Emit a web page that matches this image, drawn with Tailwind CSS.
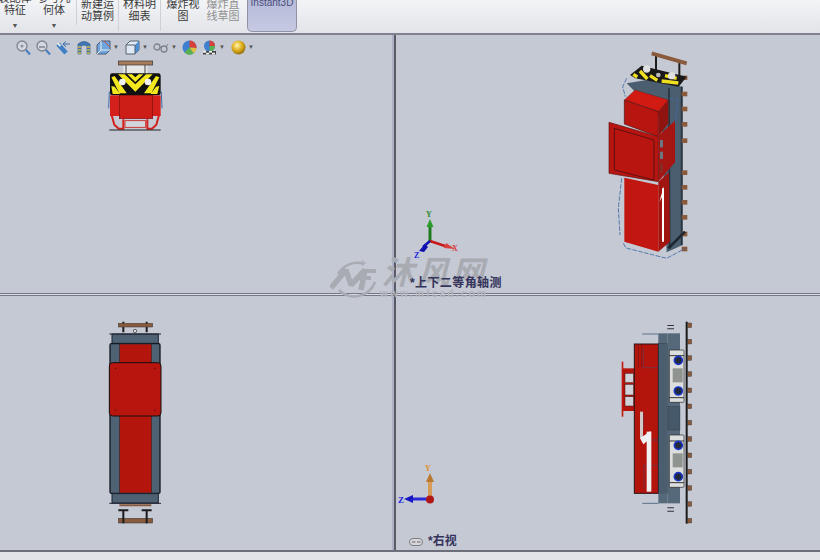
<!DOCTYPE html>
<html lang="zh">
<head>
<meta charset="UTF-8">
<title>Instant3D</title>
<script src="https://cdn.jsdelivr.net/npm/@tailwindcss/browser@4"></script>
</head>
<body class="w-[820px] h-[560px] overflow-hidden bg-[#c5c9d4] font-['Liberation_Sans','Noto_Sans_CJK_SC',sans-serif]">
<div class="relative w-[820px] h-[560px] flex flex-col">

  <!-- ribbon -->
  <div class="h-[35px] shrink-0 flex items-start bg-gradient-to-b from-[#f3f4f6] to-[#e2e4e9] border-b-2 border-[#7f828c] text-[11px] leading-[12px] text-[#3a3a3a] text-center overflow-hidden">
    <div class="w-[30px] h-[33px] flex flex-col items-center mt-[-8px] shrink-0"><span class="whitespace-nowrap">装配体</span><span>特征</span><span class="text-[7px] leading-[20px] text-[#555]">▼</span></div>
    <div class="w-[47px] h-[33px] pl-[2px] flex flex-col items-center mt-[-8px] border-r border-[#cfd1d7] shrink-0"><span class="whitespace-nowrap">参考几</span><span>何体</span><span class="text-[7px] leading-[20px] text-[#555]">▼</span></div>
    <div class="w-[42px] h-[33px] flex flex-col items-center mt-[-2px] border-r border-[#cfd1d7] shrink-0"><span>新建运</span><span>动算例</span></div>
    <div class="w-[42px] h-[33px] flex flex-col items-center mt-[-2px] border-r border-[#cfd1d7] shrink-0"><span>材料明</span><span>细表</span></div>
    <div class="w-[44px] h-[33px] flex flex-col items-center mt-[-2px] shrink-0"><span>爆炸视</span><span>图</span></div>
    <div class="w-[36px] h-[33px] flex flex-col items-center mt-[-2px] text-[#8f8f8f] shrink-0"><span class="whitespace-nowrap">爆炸直</span><span class="whitespace-nowrap">线草图</span></div>
    <div class="w-[50px] h-[32px] ml-[6px] shrink-0 rounded-b-[5px] bg-gradient-to-b from-[#b6bbd8] to-[#c6c9e2] border border-t-0 border-[#8f93a6] text-[#4c4f80] text-[10px] leading-[6px] whitespace-nowrap">Instant3D</div>
  </div>

  <!-- viewports -->
  <div class="flex-1 grid grid-cols-[392px_4px_1fr] grid-rows-[258px_3px_1fr]">
    <div></div>
    <div class="bg-[#aeb1c6] border-r-2 border-[#585a66]"></div>
    <div></div>
    <div class="border-y border-[#757885] bg-[#dadbe6]"></div>
    <div class="border-y border-[#585a66] bg-[#8a8c9c]"></div>
    <div class="border-y border-[#757885] bg-[#dadbe6]"></div>
    <div></div>
    <div class="bg-[#aeb1c6] border-r-2 border-[#585a66]"></div>
    <div class="relative">
      <div class="absolute left-[13px] bottom-[2px] flex items-center gap-[5px] text-[12px] leading-[13px] font-bold text-[#33335c]">
        <svg width="14" height="8" viewBox="0 0 14 8"><rect x="0.500" y="0.500" width="13" height="7" rx="3.500" fill="#d8d8dc" stroke="#7c7c84"/><path d="M3 4h3.500M8 4h3.500" stroke="#666"/></svg>
        <span>*右视</span>
      </div>
    </div>
  </div>

  <!-- status bar -->
  <div class="h-[10px] shrink-0 bg-[#e1e3e9] border-t-2 border-[#6c6f7a]"></div>

  <!-- heads-up toolbar -->
  <div class="absolute left-[16px] top-[39px] h-[16px] flex items-center">
    <svg width="15" height="15" viewBox="0 0 15 15"><circle cx="6" cy="6" r="5" fill="#d3d7df" stroke="#7f848e" stroke-width="1.300"/><circle cx="6" cy="6" r="1.500" fill="#8f959f"/><path d="M10 10l4 4.500" stroke="#4a7fc0" stroke-width="2.200"/></svg>
    <svg class="ml-[4px]" width="16" height="15" viewBox="0 0 16 15"><circle cx="7" cy="6" r="5" fill="#d3d7df" stroke="#7f848e" stroke-width="1.300"/><path d="M4 7h6" stroke="#7f848e" stroke-width="1.500"/><path d="M11 10l4 4.500" stroke="#4a7fc0" stroke-width="2.200"/></svg>
    <svg class="ml-[5px]" width="15" height="15" viewBox="0 0 15 15"><path d="M2 4l8 9" stroke="#3f7fc4" stroke-width="4.500"/><path d="M1.500 3l3 3" stroke="#e4e6ea" stroke-width="2"/><path d="M7 4h7M7 4l3-2.500M7 4l3 2.500" stroke="#3a6ea8" fill="none"/></svg>
    <svg class="ml-[6px]" width="14" height="15" viewBox="0 0 14 15"><path d="M1 14V4q6-5 12 0v10h-3V6q-3-2-6 0v8z" fill="#3f77b8" stroke="#24507f" stroke-width=".6"/><path d="M1 7h3M10 7h3M1 10h3M10 10h3M1 13h3M10 13h3" stroke="#d0ba40" stroke-width="1.400"/></svg>
    <svg class="ml-[5px]" width="15" height="15" viewBox="0 0 15 15"><path d="M1 5l4-4h9v9l-4 4H1z" fill="#6ea5dd" stroke="#4d5a70"/><path d="M5 1v9h9M5 10l-4 4" stroke="#eee" fill="none"/><path d="M8 1l6 6" stroke="#c05050"/></svg>
    <span class="ml-[2px] w-[7px] text-[6px] leading-none text-[#555]">▼</span>
    <svg class="ml-[5px]" width="15" height="15" viewBox="0 0 15 15"><path d="M1 5l4-4h9v9l-4 4H1z" fill="#dfe9f4" stroke="#55616f"/><path d="M10 5v9l4-4V1z" fill="#4c8fd2"/><path d="M1 5h9v9" fill="none" stroke="#55616f"/></svg>
    <span class="ml-[2px] w-[7px] text-[6px] leading-none text-[#555]">▼</span>
    <svg class="ml-[4px]" width="16" height="14" viewBox="0 0 16 14"><circle cx="4" cy="7" r="3" fill="none" stroke="#7d838c" stroke-width="1.300"/><circle cx="11" cy="9" r="3" fill="none" stroke="#7d838c" stroke-width="1.300"/><path d="M7 7l1 1M13 7l2-3" stroke="#7d838c"/></svg>
    <span class="ml-[2px] w-[7px] text-[6px] leading-none text-[#555]">▼</span>
    <svg class="ml-[4px]" width="15" height="15" viewBox="0 0 15 15"><circle cx="7.500" cy="7.500" r="7" fill="#3f7fd0"/><path d="M7.500 7.500V.5A7 7 0 0 1 14.500 8z" fill="#d8403a"/><path d="M7.500 7.500L14.500 8a7 7 0 0 1-3 5.500z" fill="#e0c040"/><path d="M7.500 7.500l4 6a7 7 0 0 1-9 -1z" fill="#58b050"/></svg>
    <svg class="ml-[5px]" width="15" height="15" viewBox="0 0 15 15"><circle cx="7.500" cy="6" r="5.500" fill="#3f7fd0"/><path d="M7.500 6V.5A5.500 5.500 0 0 1 13 6z" fill="#d8403a"/><path d="M7.500 6H13A5.500 5.500 0 0 1 7.500 11.500z" fill="#58b050"/><path d="M1 11h13v3.500H1z" fill="#444"/><path d="M1 11h3v1.700H1zM7 11h3v1.700H7zM4 12.700h3v1.800H4zM10 12.700h3v1.800h-3z" fill="#eee"/></svg>
    <span class="ml-[2px] w-[7px] text-[6px] leading-none text-[#555]">▼</span>
    <svg class="ml-[5px]" width="15" height="15" viewBox="0 0 15 15"><defs><radialGradient id="g" cx=".4" cy=".35" r=".7"><stop offset="0" stop-color="#fff6b0"/><stop offset=".5" stop-color="#e0b020"/><stop offset="1" stop-color="#8a6810"/></radialGradient></defs><circle cx="7.500" cy="7.500" r="7" fill="url(#g)"/></svg>
    <span class="ml-[2px] w-[7px] text-[6px] leading-none text-[#555]">▼</span>
  </div>

  <!-- front view -->
  <svg class="absolute left-[90px] top-[50px]" width="90" height="90" viewBox="0 0 270 270">
    <path d="M58 125l-2 50M214 125l2 50" stroke="#3d6aa8" stroke-width="3"/>
    <rect x="100" y="45" width="72" height="26" fill="#e6e6e6"/>
    <path d="M108 45v25M165 45v25" stroke="#444" stroke-width="3"/>
    <rect x="85" y="33" width="103" height="12" fill="#a87c5a" stroke="#333" stroke-width="2"/>
    <rect x="60" y="70" width="152" height="66" rx="7" fill="#111"/>
    <path d="M64 82l10-4 36 52H88zM64 108l10 2 16 22H68zM208 82l-10-4-36 52h22zM208 108l-10 2-16 22h20z" fill="#f3e81e"/>
    <path d="M84 73h20l32 30 32-30h20l-52 52z" fill="#f3e81e"/>
    <path d="M112 73h14l10 9 10-9h14l-24 23z" fill="#f3e81e"/>
    <circle cx="97" cy="96" r="10" fill="#f0f0f0"/><circle cx="174" cy="96" r="10" fill="#f0f0f0"/>
    <rect x="60" y="136" width="152" height="62" fill="#d4201a"/>
    <path d="M64 192l9 32 13 12h14v-28" fill="none" stroke="#d4201a" stroke-width="6"/>
    <path d="M208 192l-9 32-13 12h-14v-28" fill="none" stroke="#d4201a" stroke-width="6"/>
    <rect x="88" y="136" width="100" height="70" fill="#cc1e16" stroke="#801010" stroke-width="2"/>
    <rect x="105" y="212" width="62" height="20" fill="#d2d5dc" stroke="#c8201a" stroke-width="2.500"/>
    <path d="M58 240h154" stroke="#222" stroke-width="3"/>
  </svg>

  <!-- trimetric view -->
  <svg class="absolute left-[590px] top-[45px]" width="120" height="220" viewBox="0 0 360 660">
    <path d="M198 25v50M268 45v50" stroke="#1c1c1c" stroke-width="6"/>
    <path d="M185 25l105 30" stroke="#8a5a3c" stroke-width="12"/>
    <path d="M110 115l60-10 108 20v475l-48 22-5-100-10-300z" fill="#4a5e70"/>
    <path d="M237 130l2 480M275 125v475" stroke="#27323c" stroke-width="5"/>
    <g fill="#8a5a3c"><rect x="275" y="92" width="17" height="13"/><rect x="275" y="140" width="17" height="14"/><rect x="275" y="185" width="17" height="14"/><rect x="275" y="231" width="17" height="14"/><rect x="275" y="280" width="17" height="14"/><rect x="275" y="376" width="17" height="14"/><rect x="275" y="420" width="17" height="14"/><rect x="275" y="465" width="17" height="14"/><rect x="275" y="510" width="17" height="14"/><rect x="275" y="560" width="17" height="14"/><rect x="275" y="605" width="17" height="14"/></g>
    <path d="M120 90l35-28 135 33-24 30-130-25z" fill="#1a1a1a"/>
    <path d="M150 78l22 24M180 92l22 14M215 108l50 6M225 92l35 8M130 88l12 8" stroke="#f0e020" stroke-width="10"/>
    <circle cx="170" cy="72" r="11" fill="#e0e0e0"/><circle cx="245" cy="92" r="11" fill="#e0e0e0"/><circle cx="205" cy="90" r="7" fill="#b8b8b8"/>
    <path d="M103 165l32-30 100 30-30 35z" fill="#d01a12" stroke="#5a1010"/>
    <path d="M103 165l102 35v75l-102-38z" fill="#b81510" stroke="#4a1010" stroke-width="2"/>
    <path d="M205 200l30-35v70l-30 40z" fill="#8f1410"/>
    <path d="M205 272l50-45v125l-50 58z" fill="#a51512"/>
    <path d="M57 232l148 43v135l-148-25z" fill="#b81510" stroke="#5a1010" stroke-width="2"/>
    <path d="M73 250l119 35v120l-119-30z" fill="#b81510" stroke="#4a1010" stroke-width="2.500"/>
    <path d="M205 410l32-28 3 208-35 30z" fill="#a01510"/>
    <path d="M103 398l102 22v200l-102-30z" fill="#c21710"/>
    <g fill="#6d7680"><rect x="210" y="285" width="9" height="22"/><rect x="210" y="320" width="9" height="22"/></g>
    <path d="M210 355h9v28h-9z" fill="#8a2a24"/>
    <path d="M219 430v160" stroke="#fff" stroke-width="6"/>
    <path d="M208 470l14-46v22z" fill="#fff"/>
    <path d="M110 100l-12 25 8 30M238 160l24 5-5 70M95 400l-10 90 5 80M100 595l8 14 122 31 56-30" fill="none" stroke="#3d6aa8" stroke-width="2.500" stroke-dasharray="14 4"/>
    <path d="M235 610l50-50" stroke="#1d2630" stroke-width="8"/>
  </svg>

  <!-- watermark -->
  <div class="absolute left-[330px] top-[258px] w-[160px] h-[44px] text-[#a9abb2]">
    <svg class="absolute left-0 top-0" width="48" height="44" viewBox="0 0 48 44"><path d="M8 16A22 22 0 0 1 34 6M9 32a22 22 0 0 0 36-8" fill="none" stroke="#a9abb2" stroke-width="2.500"/><path d="M1 30L16 12l5 15 14-15-4 20" fill="none" stroke="#a9abb2" stroke-width="5.500" stroke-linejoin="bevel"/><path d="M32 13h14M29 20h12" stroke="#a9abb2" stroke-width="4"/><path d="M33 2v6M30 5h6" stroke="#a9abb2"/></svg>
    <span class="absolute left-[52px] top-[-2px] text-[32px] leading-[34px] font-bold italic tracking-[3px] whitespace-nowrap">沐风网</span>
    <span class="absolute left-[50px] top-[30px] text-[10px] leading-[11px] font-bold tracking-[2.300px] text-[#b3b5bc] whitespace-nowrap">www.mfcad.com</span>
  </div>

  <!-- label -->
  <span class="absolute left-[410px] top-[277px] text-[12px] leading-[13px] font-bold tracking-[0.400px] text-[#33335c] whitespace-nowrap">*上下二等角轴测</span>

  <!-- top triad -->
  <svg class="absolute left-[411px] top-[208px]" width="52" height="54" viewBox="0 0 52 54">
    <path d="M19 33V17" stroke="#1f7a1f" stroke-width="3"/><path d="M19 11l3.500 8h-7z" fill="#2a9a2a"/>
    <path d="M19 33l15 5" stroke="#c81818" stroke-width="2.500"/><path d="M44 41l-11-1 2-5z" fill="#d84040"/>
    <path d="M19 33l-7 6" stroke="#1010b0" stroke-width="2.500"/><path d="M14 36l-6 7 5 1 4-5z" fill="#1010b0"/>
    <text x="15" y="9" font-size="8" font-weight="700" fill="#2a8a2a" font-family="Liberation Serif">Y</text>
    <text x="41" y="43" font-size="8" font-weight="700" fill="#d84040" font-family="Liberation Serif">X</text>
    <text x="3" y="50" font-size="8" font-weight="700" fill="#2020e0" font-family="Liberation Serif">Z</text>
  </svg>

  <!-- bottom triad -->
  <svg class="absolute left-[394px] top-[462px]" width="48" height="46" viewBox="0 0 48 46">
    <path d="M36 37V19" stroke="#d89c58" stroke-width="4"/><path d="M36 11l4 9h-8z" fill="#b87830"/>
    <path d="M36 37H17" stroke="#2a2ad8" stroke-width="3"/><path d="M10 37l9-4v8z" fill="#1818c0"/>
    <circle cx="36" cy="37.500" r="4" fill="#b01818"/>
    <text x="31" y="9" font-size="8" font-weight="700" fill="#e09030" font-family="Liberation Serif">Y</text>
    <text x="4" y="41" font-size="9" font-weight="700" fill="#2020e0" font-family="Liberation Serif">Z</text>
  </svg>

  <!-- top view -->
  <svg class="absolute left-[90px] top-[315px]" width="90" height="215" viewBox="0 0 270 645">
    <path d="M100 20v32M170 20v32" stroke="#1c1c1c" stroke-width="6"/>
    <rect x="85" y="25" width="103" height="11" fill="#8a5a3c" stroke="#333" stroke-width="1.500"/>
    <circle cx="135" cy="48" r="5" fill="#ddd" stroke="#333" stroke-width="2"/>
    <rect x="66" y="57" width="139" height="28" fill="#4f6274" stroke="#1b2430" stroke-width="3"/>
    <path d="M58 57h155" stroke="#223" stroke-width="3"/>
    <rect x="60" y="86" width="150" height="449" rx="4" fill="#4f6274" stroke="#151a20" stroke-width="4"/>
    <rect x="88" y="87" width="97" height="447" fill="#b3150d" stroke="#26303a" stroke-width="2"/>
    <rect x="58" y="143" width="155" height="160" rx="10" fill="#b8150e" stroke="#151010" stroke-width="3"/>
    <path d="M75 160h3M193 160h3M75 285h3M193 285h3" stroke="#3a0a0a" stroke-width="3"/>
    <rect x="66" y="536" width="139" height="28" fill="#4f6274" stroke="#1b2430" stroke-width="3"/>
    <path d="M58 565h155" stroke="#223" stroke-width="3"/>
    <path d="M88 571h96" stroke="#8a5a3c" stroke-width="6"/>
    <rect x="85" y="610" width="103" height="14" fill="#8a5a3c" stroke="#333" stroke-width="1.500"/>
    <path d="M100 585v40M170 585v40M85 586h30M155 586h30" stroke="#1c1c1c" stroke-width="6"/>
  </svg>

  <!-- right view -->
  <svg class="absolute left-[610px] top-[315px]" width="90" height="215" viewBox="0 0 270 645">
    <path d="M97 57h48M97 565h48" stroke="#5a6f8a" stroke-width="3"/>
    <rect x="35" y="140" width="5" height="165" fill="#c41c14"/>
    <rect x="38" y="160" width="38" height="128" fill="#b3150d"/>
    <rect x="45" y="175" width="26" height="28" fill="#cfd2d8" stroke="#401010" stroke-width="1.500"/>
    <rect x="45" y="208" width="26" height="32" fill="#cfd2d8" stroke="#401010" stroke-width="1.500"/>
    <rect x="45" y="245" width="26" height="28" fill="#cfd2d8" stroke="#401010" stroke-width="1.500"/>
    <rect x="73" y="87" width="72" height="448" fill="#b3150d" stroke="#2a1216" stroke-width="3"/>
    <path d="M85 90v68M95 90v68" stroke="#7a1010" stroke-width="2"/>
    <path d="M100 100v58h45M100 295v50M100 375h45M100 452h45M102 452v70" fill="none" stroke="#4a4a78" stroke-width="1.500"/>
    <rect x="90" y="290" width="9" height="80" fill="#d2c8c8"/>
    <rect x="110" y="350" width="14" height="180" fill="#f1f1f1"/>
    <path d="M90 370l32-22v22l-22 18z" fill="#f1f1f1"/>
    <rect x="145" y="85" width="27" height="450" fill="#4a5e70" stroke="#1f2830" stroke-width="2"/>
    <rect x="145" y="55" width="27" height="30" fill="#56697a"/><rect x="145" y="535" width="27" height="30" fill="#56697a"/>
    <rect x="172" y="55" width="38" height="510" fill="#56697a"/>
    <rect x="174" y="275" width="36" height="70" fill="#46596a" stroke="#26303a"/>
    <g>
      <rect x="178" y="105" width="44" height="157" rx="3" fill="#dcdedd" stroke="#222" stroke-width="2"/>
      <rect x="178" y="360" width="44" height="157" rx="3" fill="#dcdedd" stroke="#222" stroke-width="2"/>
      <rect x="188" y="160" width="30" height="42" fill="#8f9490"/><rect x="188" y="415" width="30" height="42" fill="#8f9490"/>
      <path d="M178 122h44M178 248h44M178 378h44M178 503h44" stroke="#333" stroke-width="3"/>
      <circle cx="205" cy="136" r="12" fill="#20283a" stroke="#1a36c8" stroke-width="5"/>
      <circle cx="205" cy="228" r="12" fill="#20283a" stroke="#1a36c8" stroke-width="5"/>
      <circle cx="205" cy="391" r="12" fill="#20283a" stroke="#1a36c8" stroke-width="5"/>
      <circle cx="205" cy="485" r="12" fill="#20283a" stroke="#1a36c8" stroke-width="5"/>
    </g>
    <path d="M172 30h20v3h-20zM172 40h20v3h-20zM172 577h20v3h-20zM172 587h20v3h-20z" fill="#333"/>
    <path d="M230 20v606" stroke="#1a1a1a" stroke-width="6"/>
    <g fill="#8a5a3c" stroke="#222"><rect x="233" y="24" width="12" height="14"/><rect x="233" y="73" width="12" height="14"/><rect x="233" y="122" width="12" height="14"/><rect x="233" y="170" width="12" height="14"/><rect x="233" y="219" width="12" height="14"/><rect x="233" y="267" width="12" height="14"/><rect x="233" y="316" width="12" height="14"/><rect x="233" y="365" width="12" height="14"/><rect x="233" y="414" width="12" height="14"/><rect x="233" y="463" width="12" height="14"/><rect x="233" y="512" width="12" height="14"/><rect x="233" y="560" width="12" height="14"/><rect x="233" y="610" width="12" height="14"/></g>
  </svg>
</div>
</body>
</html>
